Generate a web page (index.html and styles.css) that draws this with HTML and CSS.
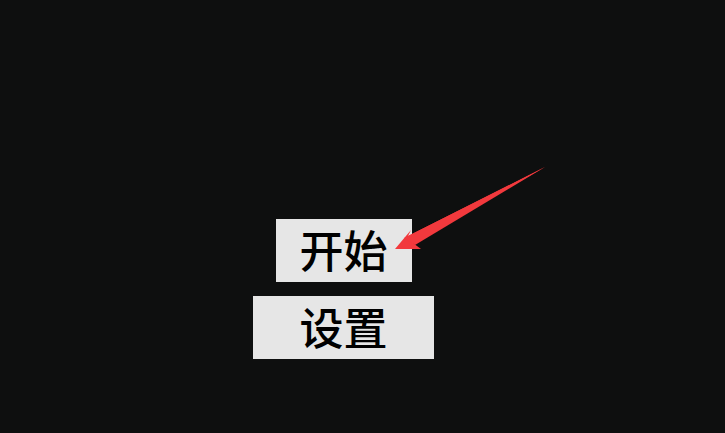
FILE: index.html
```html
<!DOCTYPE html>
<html lang="zh-CN">
<head>
    <meta charset="UTF-8">
    <meta name="viewport" content="width=device-width, initial-scale=1.0">
    <title>开始</title>
    <link rel="stylesheet" href="styles.css">
</head>
<body>
    <div class="menu">
        <button class="menu-btn start-btn">开始</button>
        <button class="menu-btn settings-btn">设置</button>
    </div>
    <!-- pointer arrow at the start button -->
    <svg class="pointer" width="725" height="433" viewBox="0 0 725 433">
        <polygon points="545,167 408,236 411,230 395,249 421,249 413,243" fill="#f2393d"/>
        <polygon points="545,167 404,238 415,245" fill="#f2393d"/>
    </svg>
</body>
</html>
```

FILE: styles.css
```css
html, body { margin: 0; padding: 0; }
body { background: #0e0f0f; width: 725px; height: 433px; overflow: hidden; position: relative; font-family: "Noto Sans CJK SC", "Noto Sans", sans-serif; }
.menu { width: 181px; margin-left: 253px; padding-top: 219px; display: flex; flex-direction: column; align-items: center; gap: 14px; }
.menu-btn { background: #e6e6e6; color: #000; border: none; border-radius: 0; padding: 0 0 4px; font-family: inherit; font-size: 44px; font-weight: 500; line-height: 1; display: flex; align-items: center; justify-content: center; }
.start-btn { width: 136px; height: 63px; }
.settings-btn { width: 181px; height: 63px; }
.pointer { position: absolute; left: 0; top: 0; }
```
